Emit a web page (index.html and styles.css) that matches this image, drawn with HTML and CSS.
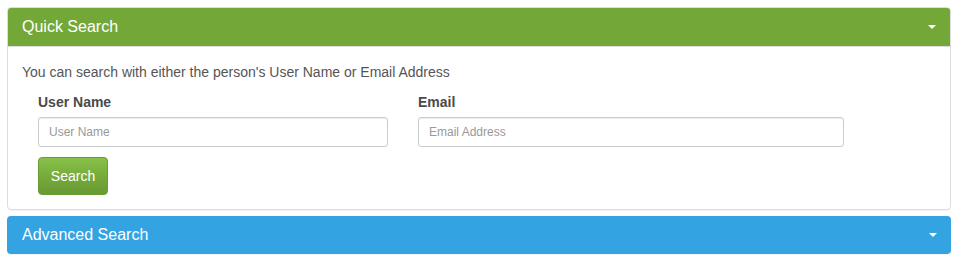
FILE: index.html
```html
<!DOCTYPE html>
<html lang="en">
  <head>
    <meta charset="UTF-8" />
    <title>Search</title>
    <link rel="stylesheet" href="styles.css">
  </head>
  <body>
    <div class="panel panel-green">
      <div class="panel-heading">
        <span>Quick Search</span>
        <span class="caret"></span>
      </div>
      <div class="panel-body">
        <p>You can search with either the person's User Name or Email Address</p>
        <form class="search-form">
          <div class="fields">
            <div class="field field-user">
              <label for="username">User Name</label>
              <input type="text" id="username" placeholder="User Name" />
            </div>
            <div class="field field-email">
              <label for="email">Email</label>
              <input type="text" id="email" placeholder="Email Address" />
            </div>
          </div>
          <button type="submit" class="btn-search">Search</button>
        </form>
      </div>
    </div>
    <div class="panel panel-blue">
      <div class="panel-heading">
        <span>Advanced Search</span>
        <span class="caret"></span>
      </div>
    </div>
  </body>
</html>
```

FILE: styles.css
```css
body {
  font-family: "Liberation Sans", Arial, sans-serif;
  font-size: 14px;
  color: #555555;
  background-color: #ffffff;
  margin: 0;
  padding: 7px 10px 7px 7px;
}
.panel {
  border: 1px solid #dddddd;
  border-radius: 4px;
  margin-bottom: 6px;
  box-shadow: 0 1px 1px rgba(0, 0, 0, 0.05);
}
.panel-heading {
  display: flex;
  justify-content: space-between;
  align-items: center;
  height: 38px;
  box-sizing: border-box;
  padding: 0 14px;
  font-size: 16px;
  color: #ffffff;
  border-radius: 3px 3px 0 0;
}
.panel-green .panel-heading {
  background-color: #73a839;
  border-bottom: 1px solid #dddddd;
  height: 39px;
  padding-bottom: 1px;
}
.panel-blue {
  border: none;
}
.panel-blue .panel-heading {
  background-color: #33a3e2;
  border-radius: 4px;
  padding-left: 15px;
}
.caret {
  width: 0;
  height: 0;
  border-top: 4px solid #ffffff;
  border-left: 4px solid transparent;
  border-right: 4px solid transparent;
}
.panel-body {
  padding: 15px 15px 14px 14px;
}
p {
  margin: 0 0 10px 0;
  line-height: 20px;
}
.fields {
  display: flex;
  padding-left: 16px;
  gap: 30px;
}
.field {
  display: flex;
  flex-direction: column;
}
.field-user {
  width: 350px;
}
.field-email {
  width: 426px;
}
label {
  font-weight: bold;
  line-height: 20px;
  margin-bottom: 5px;
  color: #4a4a4a;
}
input {
  box-sizing: border-box;
  height: 30px;
  padding: 5px 10px;
  font-family: "Liberation Sans", Arial, sans-serif;
  font-size: 12px;
  border: 1px solid #cccccc;
  border-radius: 3px;
  box-shadow: inset 0 1px 1px rgba(0, 0, 0, 0.075);
  color: #555555;
}
input::placeholder {
  color: #999999;
}
.btn-search {
  margin: 10px 0 0 16px;
  width: 70px;
  height: 38px;
  font-family: "Liberation Sans", Arial, sans-serif;
  font-size: 14px;
  color: #ffffff;
  background-image: linear-gradient(#88c149, #73a839 60%, #699934);
  border: 1px solid #6a9c34;
  border-radius: 4px;
  cursor: pointer;
}
```
